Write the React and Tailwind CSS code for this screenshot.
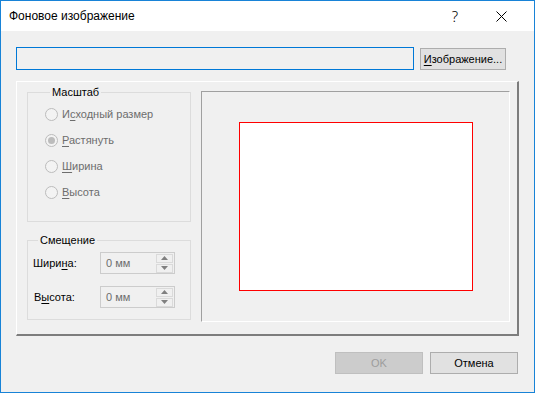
import React from 'react';

const U = ({ children }) => <span className="underline underline-offset-[2px] decoration-[1px]">{children}</span>;

const Radio = ({ label, checked }) => (
    <div className="flex items-center h-[26px]">
        <span className="w-[13px] h-[13px] rounded-full border border-[#bcbcbc] bg-[#f3f3f3] flex items-center justify-center">
            {checked && <span className="w-[7px] h-[7px] rounded-full bg-[#bcbcbc]" />}
        </span>
        <span className="ml-[4px] text-[#6d6d6d]">{label}</span>
    </div>
);

const Arrow = ({ up }) => (
    <svg width="7" height="4" viewBox="0 0 7 4">
        <path d={up ? 'M0 4 L3.5 0 L7 4 Z' : 'M0 0 L3.5 4 L7 0 Z'} fill="#808080" />
    </svg>
);

const Spin = () => (
    <div className="w-[75px] h-[22px] border border-[#cccccc] bg-[#f0f0f0] flex items-center">
        <span className="flex-1 pl-[5px] text-[#6d6d6d]">0 мм</span>
        <div className="flex flex-col gap-[1px] pr-[1px]">
            <div className="w-[17px] h-[9px] border border-[#dadada] flex items-center justify-center"><Arrow up /></div>
            <div className="w-[17px] h-[9px] border border-[#dadada] flex items-center justify-center"><Arrow /></div>
        </div>
    </div>
);

const App = () => {
    return (
        <div className="w-[535px] h-[393px] border border-[#1883d7] bg-[#f0f0f0] flex flex-col text-[11px] leading-[14px] text-black font-['Liberation_Sans','Noto_Sans',sans-serif]">
            <div className="h-[30px] bg-white flex items-center pl-[8px] text-[12px]">
                <span className="flex-1">Фоновое изображение</span>
                <span className="w-[20px] text-center text-[15px] font-['Noto_Sans',sans-serif] font-light mr-[31px]">?</span>
                <svg width="11" height="11" viewBox="0 0 11 11" className="mr-[27px]">
                    <path d="M0.5 0.5 L10.5 10.5 M10.5 0.5 L0.5 10.5" stroke="#000" strokeWidth="1" />
                </svg>
            </div>

            <div className="flex flex-col px-[15px]">
                <div className="flex items-center mt-[16px] h-[23px]">
                    <div className="w-[398px] h-[23px] border border-[#0078d7] bg-[#f0f0f0]" />
                    <button className="ml-[6px] w-[86px] h-[22px] border border-[#adadad] bg-[#e1e1e1] flex items-center justify-center whitespace-nowrap">
                        <span><U>И</U>зображение...</span>
                    </button>
                </div>

                <div className="mt-[11px] w-[503px] h-[255px] border-t border-l border-t-white border-l-white border-r-2 border-b-2 border-r-[#7d7d7d] border-b-[#7d7d7d] flex items-start pt-[3px] pl-[10px]">
                    <div className="w-[164px] flex flex-col">
                        <fieldset className="h-[137px] border border-[#dcdcdc] pl-[17px] pt-[2px]">
                            <legend className="ml-[5px] px-[2px]">Масштаб</legend>
                            <Radio label={<>И<U>с</U>ходный размер</>} />
                            <Radio label={<><U>Р</U>астянуть</>} checked />
                            <Radio label={<><U>Ш</U>ирина</>} />
                            <Radio label={<><U>В</U>ысота</>} />
                        </fieldset>
                        <fieldset className="mt-[11px] h-[87px] border border-[#dcdcdc] pl-[5px]">
                            <legend className="ml-[5px] px-[2px]">Смещение</legend>
                            <div className="flex items-center mt-[5px]">
                                <span className="w-[67px]">Шири<U>н</U>а:</span>
                                <Spin />
                            </div>
                            <div className="flex items-center mt-[12px]">
                                <span className="w-[67px] pl-[1px]">В<U>ы</U>сота:</span>
                                <Spin />
                            </div>
                        </fieldset>
                    </div>

                    <div className="ml-[10px] mt-[6px] w-[309px] h-[231px] border border-t-[#a0a0a0] border-l-[#a0a0a0] border-r-white border-b-white flex items-center justify-center">
                        <div className="w-[234px] h-[169px] border border-[#ff0000] bg-white" />
                    </div>
                </div>

                <div className="mt-[16px] flex justify-end gap-[7px] pr-[1px]">
                    <button className="w-[88px] h-[22px] border border-[#bfbfbf] bg-[#cccccc] text-[#9d9d9d]">OK</button>
                    <button className="w-[88px] h-[22px] border border-[#adadad] bg-[#e1e1e1]">Отмена</button>
                </div>
            </div>
        </div>
    );
};

export default App;
